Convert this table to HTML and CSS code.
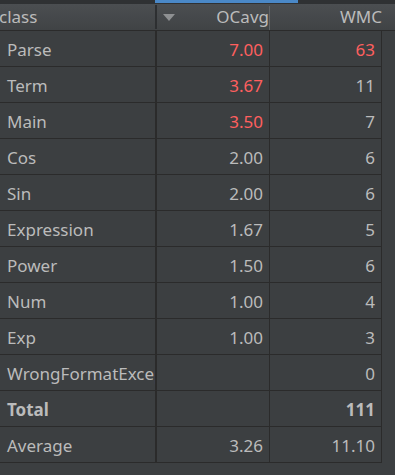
FILE: index.html
```html
<!DOCTYPE html>
<html>
<head>
<meta charset="utf-8">
<link rel="stylesheet" href="styles.css">
</head>
<body>
<div class="topbar"><div class="tab-indicator"></div></div>
<div class="header">
  <div class="hcell hcell-name">class</div>
  <div class="hcell hcell-mid"><span class="sort-arrow"></span><span class="hlabel">OCavg</span></div>
  <div class="hcell hcell-last">WMC</div>
</div>
<div class="table">
  <div class="row"><div class="cell name">Parse</div><div class="cell num red">7.00</div><div class="cell num red">63</div></div>
  <div class="row"><div class="cell name">Term</div><div class="cell num red">3.67</div><div class="cell num">11</div></div>
  <div class="row"><div class="cell name">Main</div><div class="cell num red">3.50</div><div class="cell num">7</div></div>
  <div class="row"><div class="cell name">Cos</div><div class="cell num">2.00</div><div class="cell num">6</div></div>
  <div class="row"><div class="cell name">Sin</div><div class="cell num">2.00</div><div class="cell num">6</div></div>
  <div class="row"><div class="cell name">Expression</div><div class="cell num">1.67</div><div class="cell num">5</div></div>
  <div class="row"><div class="cell name">Power</div><div class="cell num">1.50</div><div class="cell num">6</div></div>
  <div class="row"><div class="cell name">Num</div><div class="cell num">1.00</div><div class="cell num">4</div></div>
  <div class="row"><div class="cell name">Exp</div><div class="cell num">1.00</div><div class="cell num">3</div></div>
  <div class="row"><div class="cell name">WrongFormatException</div><div class="cell num"></div><div class="cell num">0</div></div>
  <div class="row bold"><div class="cell name">Total</div><div class="cell num"></div><div class="cell num">111</div></div>
  <div class="row"><div class="cell name">Average</div><div class="cell num">3.26</div><div class="cell num">11.10</div></div>
</div>
</body>
</html>
```
FILE: styles.css
```css
html, body {
  margin: 0;
  padding: 0;
}
body {
  background: #3c3f41;
  font-family: "Noto Sans", "Open Sans", sans-serif;
  font-size: 17px;
  color: #bbbbbb;
  width: 395px;
  height: 475px;
  overflow: hidden;
}
.topbar {
  height: 4px;
  background: #2f3133;
}
.tab-indicator {
  margin-left: 155px;
  width: 143px;
  height: 3px;
  background: #4a88c7;
}
.header {
  display: flex;
  height: 26px;
  background: linear-gradient(#4b4e51, #404345);
  border-bottom: 1px solid #2b2b2b;
}
.hcell {
  display: flex;
  align-items: center;
  height: 26px;
  box-sizing: border-box;
  white-space: nowrap;
  line-height: 20px;
}
.hcell-name {
  width: 157px;
  text-indent: -1px;
  position: relative;
}
.hcell-name::after {
  content: "";
  position: absolute;
  right: 0;
  top: 1px;
  bottom: 1px;
  width: 2px;
  background: #2d2f31;
}
.hcell-mid {
  width: 113px;
  justify-content: space-between;
  padding-left: 6px;
  position: relative;
}
.hcell-mid::after {
  content: "";
  position: absolute;
  right: 0;
  top: 2px;
  bottom: 0;
  width: 1px;
  background: #606366;
}
.hlabel {
  padding-right: 1px;
}
.hcell-last {
  flex: 1;
  justify-content: flex-end;
  padding-right: 13px;
}
.sort-arrow {
  width: 0;
  height: 0;
  border-left: 6px solid transparent;
  border-right: 6px solid transparent;
  border-top: 7px solid #8e9092;
  margin-top: 1px;
}
.table {
  width: 382px;
}
.row {
  display: flex;
  height: 36px;
  box-sizing: border-box;
  border-bottom: 1px solid #2b2b2b;
  border-right: 1px solid #2b2b2b;
}
.row.bold {
  font-weight: bold;
}
.cell {
  box-sizing: border-box;
  height: 35px;
  line-height: 38px;
  white-space: nowrap;
  overflow: hidden;
  border-right: 1px solid #2b2b2b;
}
.cell:last-child {
  border-right: none;
}
.cell.name {
  width: 157px;
  padding-left: 7px;
  border-right-width: 2px;
}
.cell.num {
  text-align: right;
  padding-right: 6px;
}
.cell.num:nth-child(2) {
  width: 113px;
}
.cell.num:nth-child(3) {
  flex: 1;
}
.red {
  color: #ff5f5f;
}
```
